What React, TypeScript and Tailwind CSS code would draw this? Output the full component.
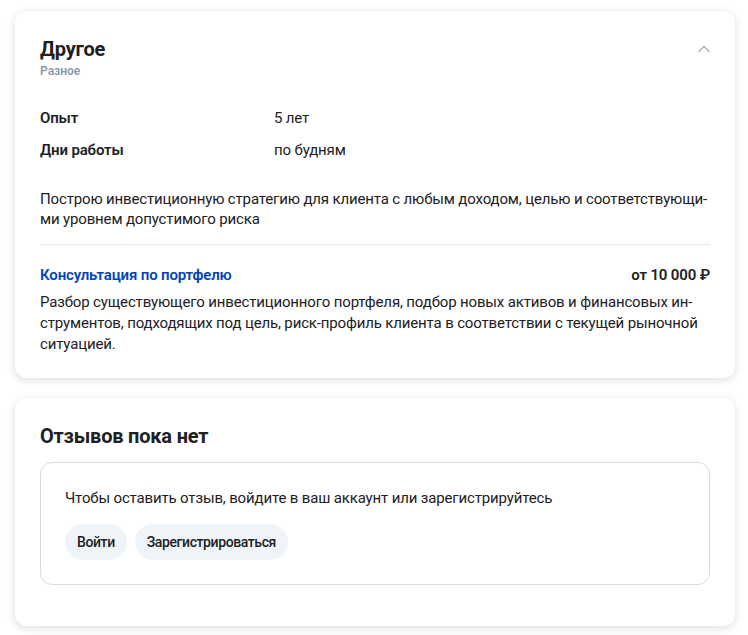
import { ChevronUp } from "lucide-react"

const font = { fontFamily: "Roboto, 'Noto Sans', sans-serif" }

function InfoRow({ label, value }: { label: string; value: string }) {
  return (
    <div className="flex text-[15px] leading-5 tracking-[-0.15px]">
      <div className="w-[234px] shrink-0 font-semibold text-[#21201f]">{label}</div>
      <div className="text-[#21201f]">{value}</div>
    </div>
  )
}

export default function App() {
  return (
    <div className="min-h-[635px] bg-white pl-[15px] pr-[13px] pt-[11px] pb-[10px]" style={font}>
      <section className="rounded-xl bg-white px-[25px] pt-[24px] pb-[23px] shadow-[0_2px_8px_rgba(30,45,70,0.16)]">
        <div className="flex items-start justify-between">
          <div>
            <h2 className="text-[20px] font-bold leading-7 tracking-[-0.2px] text-[#21201f]">Другое</h2>
            <p className="text-[12px] font-semibold leading-4 text-[#8a9aaa]">Разное</p>
          </div>
          <button type="button" className="mt-[4px] mr-[-4px] text-[#a8b6c4]" aria-label="Свернуть">
            <ChevronUp size={20} strokeWidth={2} />
          </button>
        </div>

        <div className="mt-[29px] flex flex-col gap-3">
          <InfoRow label="Опыт" value="5 лет" />
          <InfoRow label="Дни работы" value="по будням" />
        </div>

        <p className="mt-[29px] text-[15px] leading-5 tracking-[-0.15px] text-[#21201f]">
          Построю инвестиционную стратегию для клиента с любым доходом, целью и соответствующи­ми уровнем допустимого риска
        </p>

        <hr className="mt-[15px] border-t border-[#e4e9ef]" />

        <div className="mt-[20px] flex items-baseline justify-between text-[15px] leading-5 tracking-[-0.15px]">
          <a className="font-semibold text-[#0044bb]">Консультация по портфелю</a>
          <span className="font-semibold text-[#21201f]">от 10 000 ₽</span>
        </div>
        <p className="mt-[7px] text-[15px] leading-[21px] tracking-[-0.15px] text-[#21201f]">
          Разбор существующего инвестиционного портфеля, подбор новых активов и финансовых ин­струментов, подходящих под цель, риск-профиль клиента в соответствии с текущей рыночной ситуацией.
        </p>
      </section>

      <section className="mt-[20px] rounded-xl bg-white px-[25px] pt-[26px] pb-[41px] shadow-[0_2px_8px_rgba(30,45,70,0.16)]">
        <h2 className="text-[20px] font-bold leading-6 tracking-[-0.2px] text-[#21201f]">Отзывов пока нет</h2>
        <div className="mt-[14px] rounded-xl border border-[#d7dce2] px-[24px] pt-[25px] pb-[24px]">
          <p className="text-[15px] leading-5 tracking-[-0.15px] text-[#21201f]">
            Чтобы оставить отзыв, войдите в ваш аккаунт или зарегистрируйтесь
          </p>
          <div className="mt-[16px] flex gap-2">
            <button type="button" className="h-9 rounded-full bg-[#eff4f9] px-3 text-[14px] font-medium tracking-[-0.4px] text-[#21201f]">
              Войти
            </button>
            <button type="button" className="h-9 rounded-full bg-[#eff4f9] px-3 text-[14px] font-medium tracking-[-0.4px] text-[#21201f]">
              Зарегистрироваться
            </button>
          </div>
        </div>
      </section>
    </div>
  )
}
